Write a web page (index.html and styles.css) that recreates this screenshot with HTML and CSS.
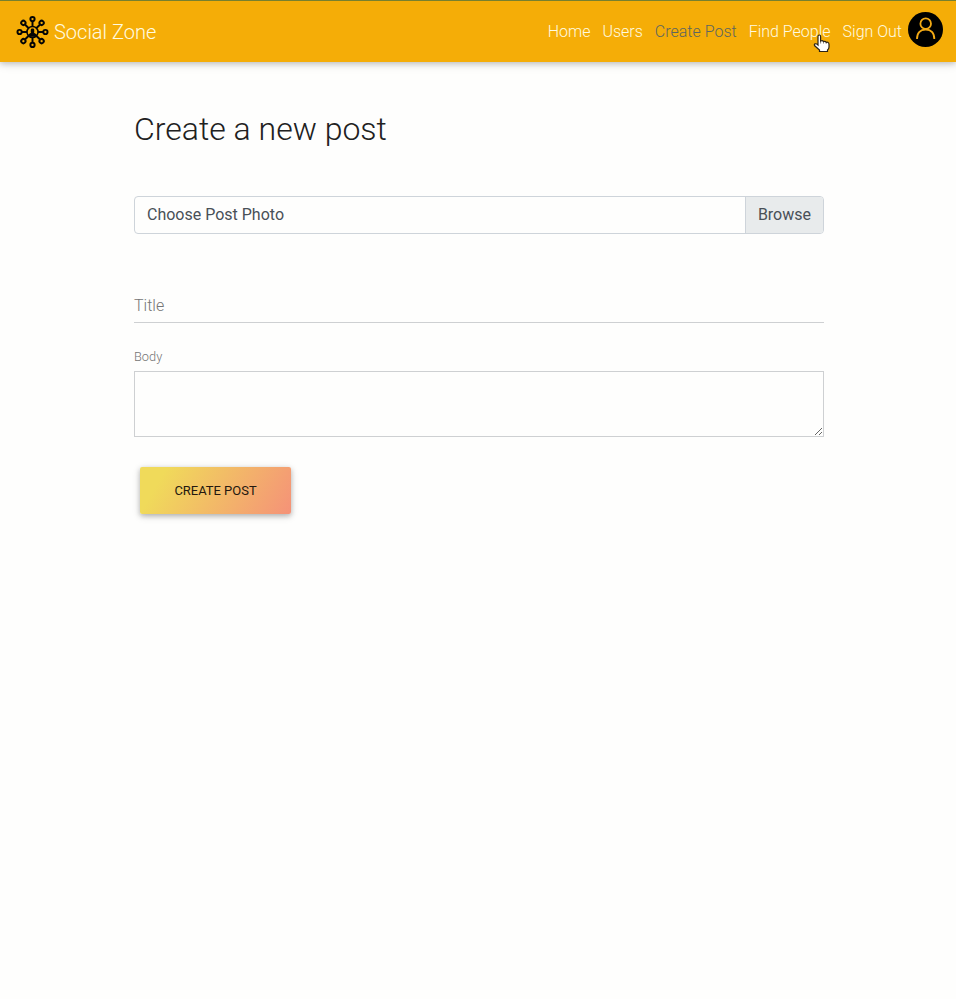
FILE: index.html
```html
<!DOCTYPE html>
<html lang="en">
<head>
<meta charset="utf-8">
<title>Social Zone</title>
<link rel="stylesheet" href="styles.css">
</head>
<body>
<nav class="navbar">
  <a class="brand">
    <svg class="logo" viewBox="0 0 34 34" fill="none" stroke="#050505" stroke-width="2">
      <circle cx="17" cy="17" r="5.7" stroke-width="1.6"/>
      <g id="spoke"><path d="M17 11.5V6"/><circle cx="17" cy="3.7" r="2.2"/></g>
      <use href="#spoke" transform="rotate(45 17 17)"/>
      <use href="#spoke" transform="rotate(90 17 17)"/>
      <use href="#spoke" transform="rotate(135 17 17)"/>
      <use href="#spoke" transform="rotate(180 17 17)"/>
      <use href="#spoke" transform="rotate(225 17 17)"/>
      <use href="#spoke" transform="rotate(270 17 17)"/>
      <use href="#spoke" transform="rotate(315 17 17)"/>
      <rect x="15.200" y="13.400" width="3.600" height="5" rx="1.500" fill="#050505" stroke="none"/>
      <path d="M15.800 17.500h2.400l2.800 1.800v2.700h-8v-2.700z" fill="#050505" stroke="none"/>
    </svg>
    <span>Social Zone</span>
  </a>
  <div class="links">
    <a>Home</a>
    <a>Users</a>
    <a class="active">Create Post</a>
    <a class="hovered">Find People<svg class="cursor" viewBox="0 0 18 20"><path d="M5 2.5Q5 1 6.3 1T7.600 2.500V7Q9.500 6 10.500 7.500Q12.300 6.800 13.200 8.300Q16 7.800 16 10.500V13Q16 15 14.500 16V17.500H6.500V16L1.700 11.800Q.8 10.500 2 9.900T5 11Z" fill="#fff" stroke="#2c2418" stroke-width="1.200"/><path d="M7.600 7V9.500M10.500 7.600V9.500M13.200 8.500V9.800" stroke="#2c2418" stroke-width=".6"/></svg></a>
    <a>Sign Out</a>
  </div>
  <svg class="avatar" viewBox="0 0 35 35" fill="none" stroke="#f4aa14" stroke-width="1.800">
    <circle cx="17.500" cy="17.500" r="17.500" fill="#000" stroke="none"/>
    <circle cx="17.700" cy="11.700" r="5.300"/>
    <path d="M9 27C9 20.500 12.500 17.500 17.700 17.500S26.300 20.500 26.300 27"/>
  </svg>
</nav>
<main class="container">
  <h2>Create a new post</h2>
  <div class="file"><span class="file-name">Choose Post Photo</span><span class="browse">Browse</span></div>
  <div class="title-field">Title</div>
  <label class="body-label" for="body">Body</label>
  <textarea id="body"></textarea>
  <button class="submit" type="button">Create Post</button>
</main>
</body>
</html>
```
FILE: styles.css
```css
* { box-sizing: border-box; }
body { margin: 0; min-height: 999px; background: #fefefd; font: 300 16px/24px Roboto, sans-serif; color: #212121; }
.navbar { display: flex; align-items: center; height: 62px; padding: 0 13px 0 16px; background: #f5ad07; border-top: 1px solid #77802f; box-shadow: 0 2px 5px rgba(0,0,0,.16), 0 2px 10px rgba(0,0,0,.12); }
.brand { display: flex; align-items: center; gap: 5px; color: #fffbe0; font-size: 20px; line-height: 30px; }
.logo { width: 33px; height: 34px; }
.links { display: flex; gap: 12px; margin-left: auto; color: #fffbe0; white-space: nowrap; }
.active { color: #5c6560; }
.hovered { position: relative; }
.cursor { position: absolute; width: 18px; height: 20px; left: 64px; top: 14px; }
.avatar { width: 35px; height: 35px; margin: -4px 0 0 6px; }
.container { width: 690px; margin: 0 0 0 134px; padding-top: 48px; }
h2 { margin: 0; font-size: 32px; font-weight: 300; line-height: 38px; }
.file { display: flex; justify-content: space-between; height: 38px; margin-top: 48px; border: 1px solid #ced4da; border-radius: 4px; background: #fefefd; font-weight: 400; color: #495057; overflow: hidden; }
.file-name { padding: 6px 12px; }
.browse { padding: 6px 12px; background: #e8ebec; border-left: 1px solid #ced4da; }
.title-field { height: 38px; margin-top: 51px; padding-top: 9px; border-bottom: 1px solid #ced0d2; color: #757575; }
.body-label { display: block; margin-top: 24px; font-size: 12.800px; line-height: 20px; color: #757575; }
textarea { display: block; width: 100%; height: 66px; margin-top: 4px; border: 1px solid #ced0d2; background: #fefefd; resize: vertical; outline: 0; }
.submit { display: block; width: 151px; height: 47px; margin: 30px 0 0 6px; padding: 0; border: 0; border-radius: 2px; background: linear-gradient(120deg, #f0da5a 15%, #f59278); box-shadow: 0 2px 5px rgba(0,0,0,.22), 0 2px 8px rgba(0,0,0,.14); color: #24180f; font: 400 12.960px Roboto, sans-serif; text-transform: uppercase; }
```
